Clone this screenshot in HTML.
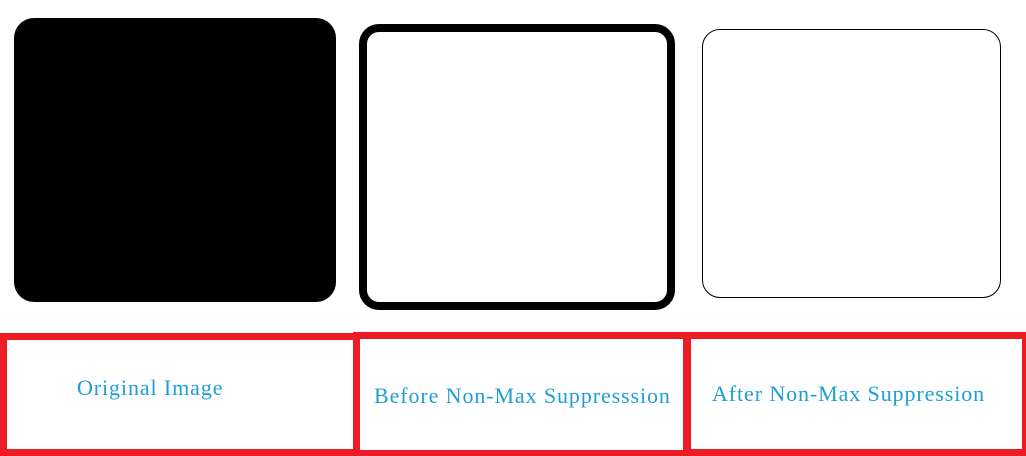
<!DOCTYPE html>
<html><head><style>
body{margin:0;width:1026px;height:456px;background:#fff;position:relative;overflow:hidden;font-family:"Liberation Serif",serif;}
div{position:absolute;box-sizing:border-box;}
.t{color:#1e9ed8;font-size:22px;letter-spacing:0.9px;white-space:nowrap;}
</style></head><body>
<div style="left:14px;top:18px;width:322px;height:284px;background:#000;border-radius:20px"></div>
<div style="left:359px;top:24px;width:316px;height:286px;border:8px solid #000;border-radius:20px"></div>
<div style="left:702px;top:29px;width:299px;height:269px;border:1px solid #000;border-radius:18px"></div>
<div style="left:0;top:333px;width:360px;height:123px;border:7px solid #ed1c24"></div>
<div style="left:353px;top:332px;width:338px;height:124px;border:7px solid #ed1c24;border-bottom-width:6px"></div>
<div style="left:683px;top:332px;width:343px;height:124px;border:7px solid #ed1c24;border-right-width:4px"></div>
<div class="t" style="left:77px;top:375px">Original Image</div>
<div class="t" style="left:374px;top:383px">Before Non-Max Suppresssion</div>
<div class="t" style="left:712px;top:381px">After Non-Max Suppression</div>
</body></html>
